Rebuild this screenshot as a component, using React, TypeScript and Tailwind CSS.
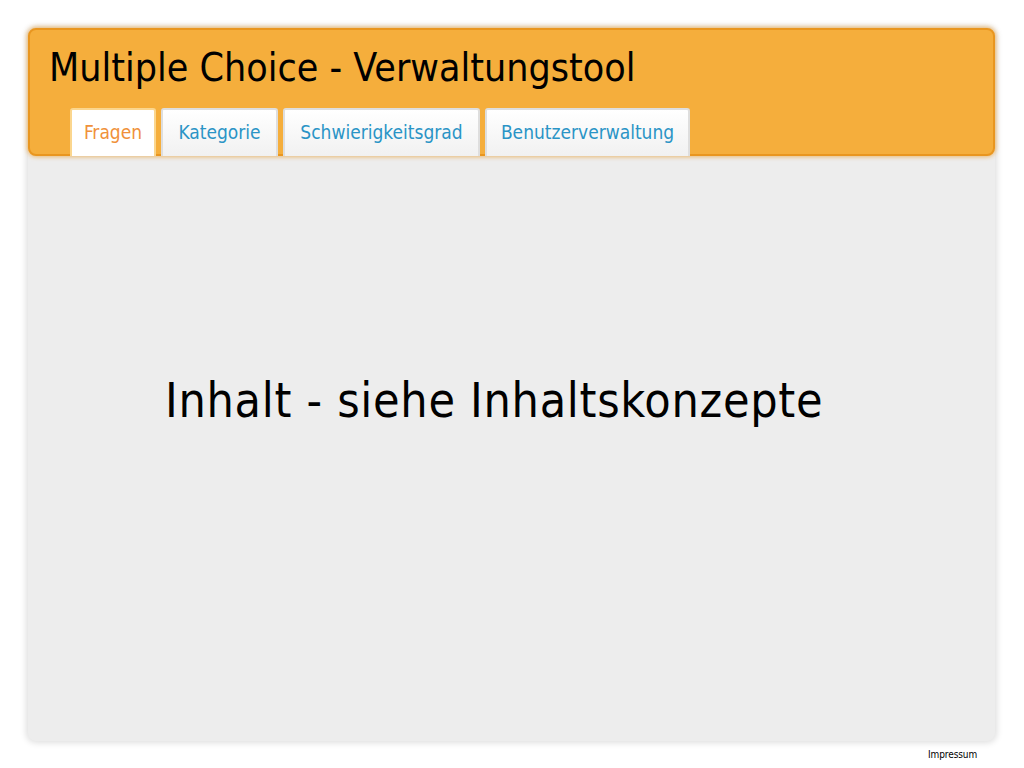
const tabs = [
  { label: 'Fragen', w: 'w-[86px]' },
  { label: 'Kategorie', w: 'w-[117px]' },
  { label: 'Schwierigkeitsgrad', w: 'w-[197px]' },
  { label: 'Benutzerverwaltung', w: 'w-[205px]' },
];

export default function App() {
  return (
    <div className="w-[1024px] h-[768px] bg-white relative" style={{ fontFamily: '"DejaVu Sans Condensed", "DejaVu Sans", Verdana, sans-serif' }}>
      <div className="absolute left-[28px] top-[28px] w-[967px] h-[713px] rounded-lg bg-[#ededed] shadow-[0_0_6px_2px_rgba(0,0,0,0.13)] flex flex-col">
        {/* Header */}
        <div className="h-[128px] rounded-lg bg-[#f5ae3c] border-2 border-[#e9961f] shadow-[0_0_4px_1px_rgba(233,150,31,0.6)] flex flex-col">
          <h1 className="text-[39px] leading-none text-black pl-[19px] pt-[18px] tracking-[0px]">Multiple Choice - Verwaltungstool</h1>
          <div className="flex gap-[5px] pl-[40px] mt-auto -mb-[2px]">
            {tabs.map((t, i) => (
              <div
                key={t.label}
                className={
                  i === 0
                    ? `${t.w} h-[48px] pt-[8px] text-center rounded-t-[3px] bg-white border-2 border-b-0 border-[#fbd68e] text-[#f0913a] text-[19px]`
                    : `${t.w} h-[48px] pt-[8px] text-center rounded-t-[3px] bg-gradient-to-b from-white to-[#f1f1f1] border-2 border-b-0 border-[#dedede] text-[#2a94c6] text-[19px]`
                }
              >
                {t.label}
              </div>
            ))}
          </div>
        </div>
        <div className="flex-1 pt-[220px] pl-[137px]">
          <p className="text-[48px] leading-none text-black tracking-[0.7px]">Inhalt - siehe Inhaltskonzepte</p>
        </div>
      </div>
      <div className="absolute left-[928px] top-[747px] text-[10px] text-black tracking-[-0.1px]">Impressum</div>
    </div>
  );
}
